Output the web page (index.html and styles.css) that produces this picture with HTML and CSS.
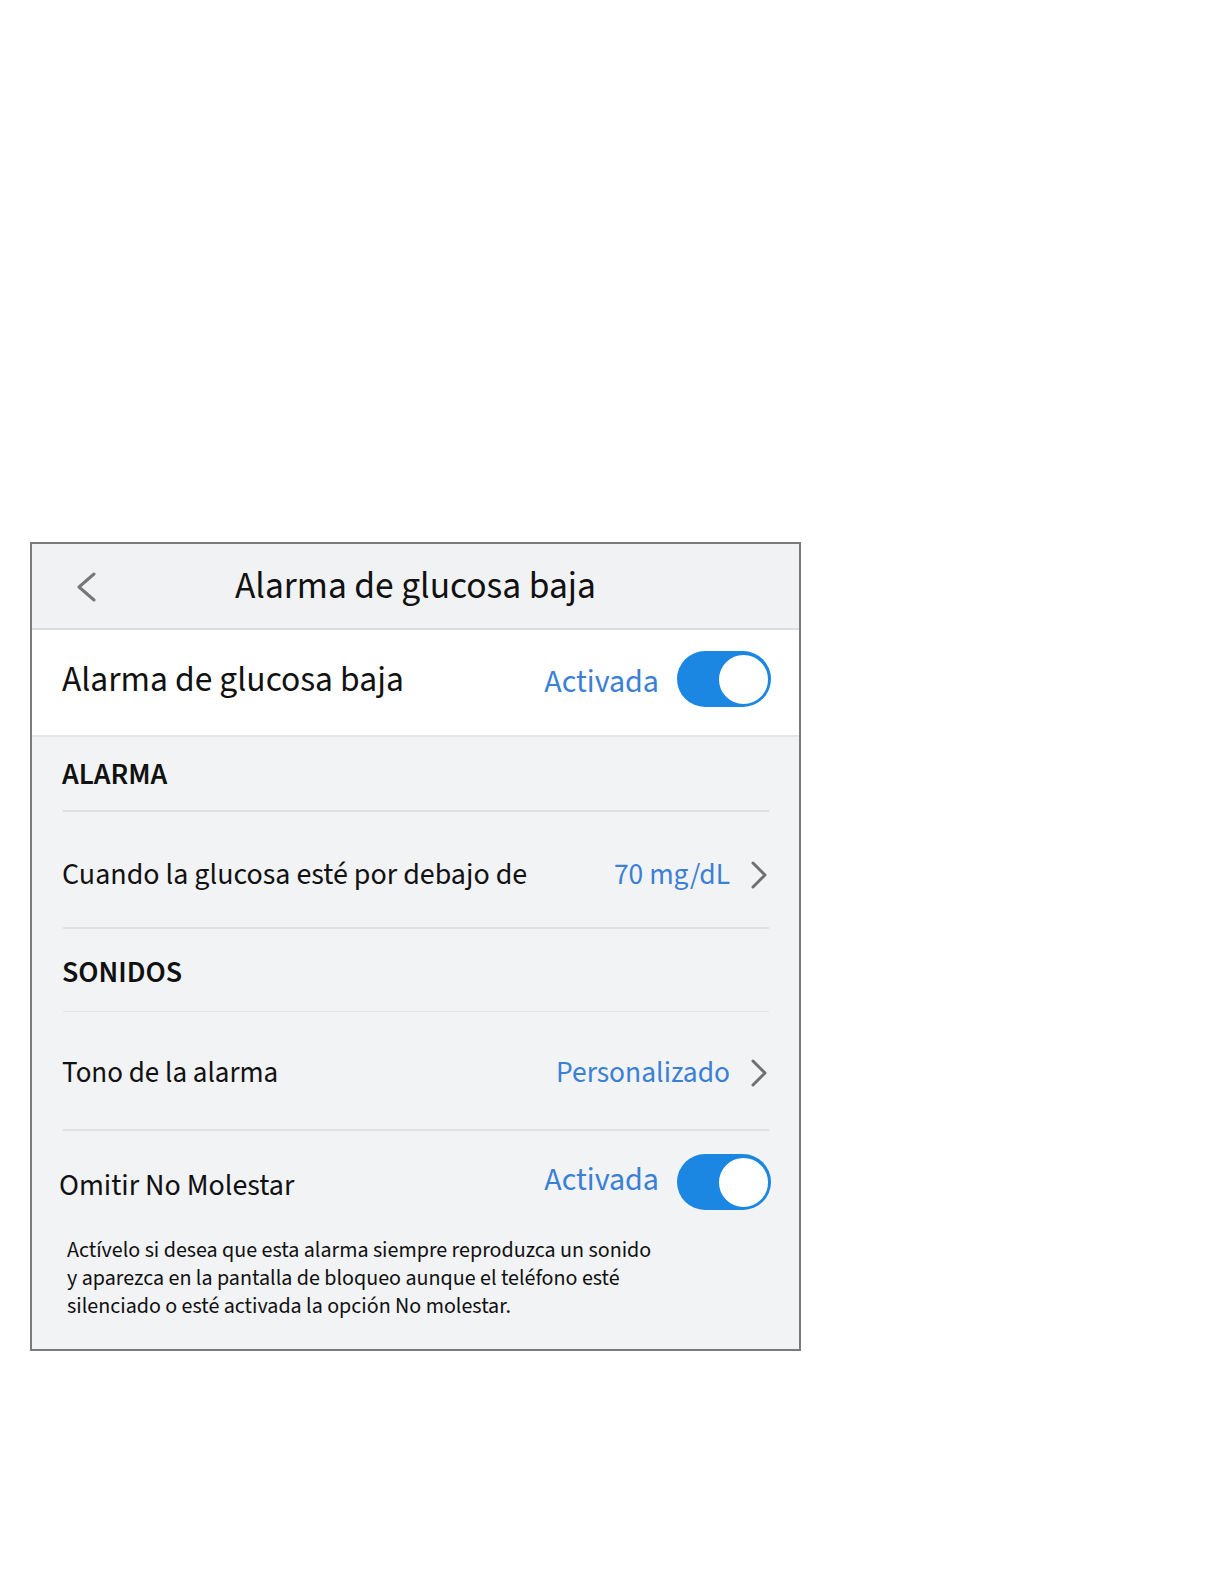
FILE: index.html
```html
<!DOCTYPE html>
<html lang="es">
<head>
  <meta charset="UTF-8" />
  <meta name="viewport" content="width=device-width, initial-scale=1.0" />
  <title>Alarma de glucosa baja</title>
  <link rel="stylesheet" href="styles.css">
</head>
<body>
  <div class="page">
    <div class="panel">
      <div class="nav-bar">
        <div class="nav-back">
          <svg width="22" height="30" viewBox="0 0 22 30">
            <polyline points="19,2 4,15 19,28" fill="none" stroke="#777" stroke-width="3" stroke-linecap="round" stroke-linejoin="round" />
          </svg>
        </div>
        <div class="nav-title">Alarma de glucosa baja</div>
        <div></div>
      </div>

      <div class="master-row">
        <div class="master-label">Alarma de glucosa baja</div>
        <div class="row-right">
          <span class="value status">Activada</span>
          <div class="toggle"><div class="knob"></div></div>
        </div>
      </div>

      <div class="section-title first">ALARMA</div>
      <div class="divider"></div>

      <div class="row row-threshold">
        <div class="row-label">Cuando la glucosa esté por debajo de</div>
        <div class="row-right">
          <span class="value">70 mg/dL</span>
          <svg class="chevron" width="18" height="28" viewBox="0 0 18 28">
            <polyline points="3,2 15,14 3,26" fill="none" stroke="#707070" stroke-width="3" stroke-linecap="round" stroke-linejoin="round" />
          </svg>
        </div>
      </div>
      <div class="divider"></div>

      <div class="section-title second">SONIDOS</div>
      <div class="divider light"></div>

      <div class="row row-tone">
        <div class="row-label tone-label">Tono de la alarma</div>
        <div class="row-right">
          <span class="value">Personalizado</span>
          <svg class="chevron" width="18" height="28" viewBox="0 0 18 28">
            <polyline points="3,2 15,14 3,26" fill="none" stroke="#707070" stroke-width="3" stroke-linecap="round" stroke-linejoin="round" />
          </svg>
        </div>
      </div>
      <div class="divider"></div>

      <div class="dnd">
        <div class="dnd-row">
          <div class="row-label dnd-label">Omitir No Molestar</div>
          <div class="row-right">
            <span class="value status dnd-value">Activada</span>
            <div class="toggle"><div class="knob"></div></div>
          </div>
        </div>
        <p class="hint">Actívelo si desea que esta alarma siempre reproduzca un sonido<br>y aparezca en la pantalla de bloqueo aunque el teléfono esté<br>silenciado o esté activada la opción No molestar.</p>
      </div>
    </div>
  </div>
</body>
</html>
```

FILE: styles.css
```css
* {
  box-sizing: border-box;
}

body {
  margin: 0;
  background: #fff;
  font-family: "Source Sans 3", Lato, sans-serif;
  color: #111;
}

.page {
  padding: 542px 0 0 30px;
}

.panel {
  width: 771px;
  height: 809px;
  border: 2px solid #7a7a7a;
  background: #f2f3f5;
}

.nav-bar {
  display: grid;
  grid-template-columns: 1fr auto 1fr;
  align-items: center;
  height: 86px;
  border-bottom: 2px solid #dcdcdc;
  background: #f1f2f4;
}

.nav-back {
  display: flex;
  padding-left: 43px;
  padding-top: 1px;
}

.nav-title {
  font-size: 37.5px;
}

.master-row {
  display: flex;
  justify-content: space-between;
  align-items: center;
  height: 107px;
  padding: 0 28px 7px 30px;
  background: #fff;
  border-bottom: 2px solid #e6e7e9;
}

.master-label {
  font-size: 35.5px;
  padding-top: 2px;
}

.row-right {
  display: flex;
  align-items: center;
}

.value {
  color: #3a80d5;
  font-size: 29.5px;
}

.value.status {
  font-size: 32px;
  padding-top: 5px;
}

.toggle {
  display: flex;
  justify-content: flex-end;
  align-items: center;
  width: 94px;
  height: 56px;
  margin-left: 18px;
  padding: 1px;
  border-radius: 28px;
  background: #1b87e2;
}

.knob {
  width: 53px;
  height: 53px;
  border-radius: 50%;
  border: 2px solid #1b87e2;
  background: #fff;
}

.section-title {
  display: flex;
  align-items: center;
  height: 82px;
  padding-left: 30px;
  font-size: 30px;
  font-weight: 600;
}

.section-title.first {
  height: 73px;
  padding-top: 2px;
}

.section-title.second {
  padding-top: 5px;
}

.divider {
  height: 2px;
  margin: 0 30px 0 31px;
  background: #dfe0e3;
}

.divider.light {
  height: 1px;
  background: #e4e5e8;
}

.row {
  display: flex;
  justify-content: space-between;
  align-items: center;
  padding: 0 31px 0 30px;
}

.row-threshold {
  height: 115px;
  padding-top: 10px;
}

.row-tone {
  height: 117px;
  padding-top: 4px;
}

.row-label {
  font-size: 30px;
}

.tone-label {
  font-size: 29px;
}

.chevron {
  margin-left: 20px;
}

.dnd {
  padding: 23px 28px 0 27px;
}

.dnd-row {
  display: flex;
  justify-content: space-between;
  align-items: center;
}

.dnd-label {
  padding-top: 6px;
}

.dnd-value.status {
  padding-top: 0;
  padding-bottom: 5px;
}

.hint {
  margin: 26px 0 0 8px;
  font-size: 22px;
  line-height: 28px;
}
```
